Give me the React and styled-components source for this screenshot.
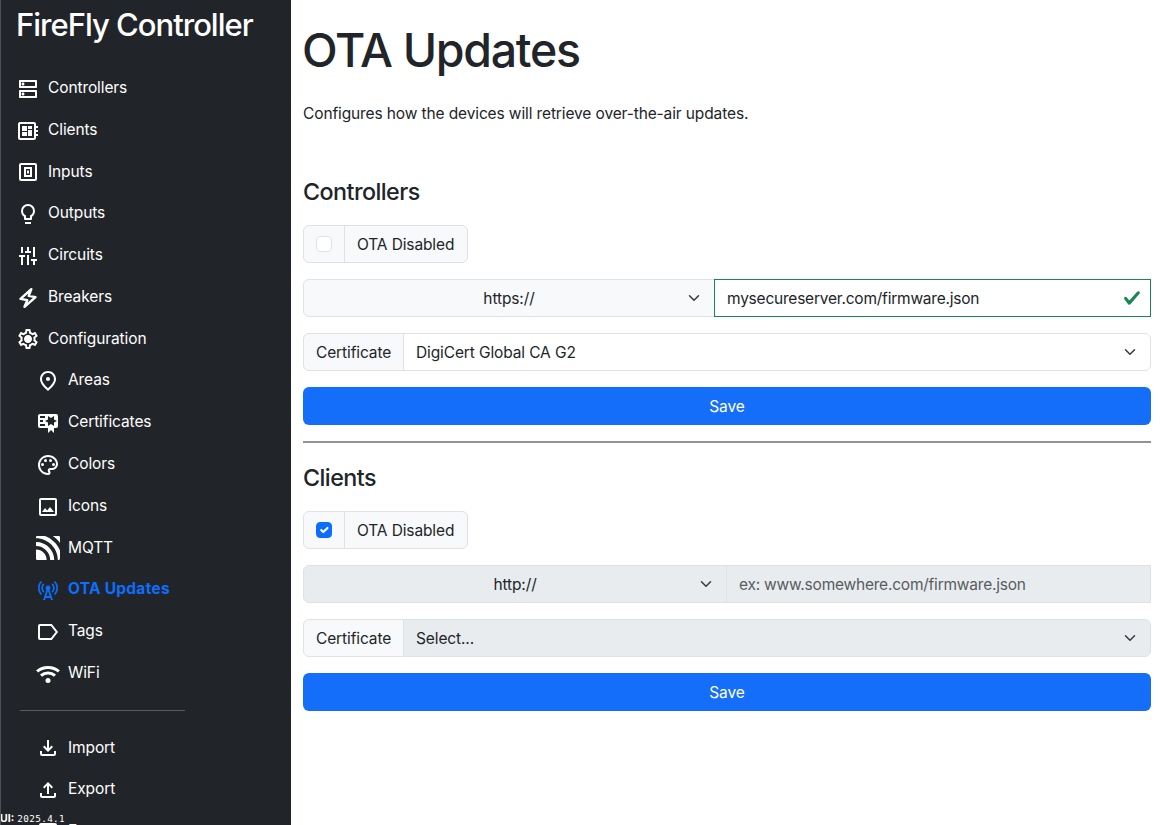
import React from "react";
import styled, { createGlobalStyle } from "styled-components";
import {
  MdOutlineDns,
  MdOutlineDeveloperBoard,
  MdOutlineSettings,
  MdOutlineFmdGood,
  MdOutlinePalette,
  MdCellTower,
  MdOutlineFileDownload,
  MdOutlineFileUpload,
} from "react-icons/md";
import { SiMqtt } from "react-icons/si";

const GlobalStyle = createGlobalStyle`
  *, *::before, *::after { box-sizing: border-box; }
  body {
    margin: 0;
    background: #fff;
    color: #212529;
    font-family: Inter, "Liberation Sans", sans-serif;
    font-size: 15.5px;
    line-height: 24px;
    letter-spacing: -0.12px;
  }
  h1, h2, p { margin: 0; }
  button, input { font: inherit; letter-spacing: inherit; }
`;

const Page = styled.div`
  display: flex;
  height: 825px;
  overflow: hidden;
`;

const Sidebar = styled.aside`
  position: relative;
  flex: 0 0 291px;
  height: 825px;
  overflow: hidden;
  background: #212529;
  border-left: 1px solid #495057;
  color: #fff;
`;

const Brand = styled.h1`
  padding: 6px 0 0 15px;
  font-size: 31px;
  font-weight: 500;
  line-height: 38px;
  letter-spacing: -1px;
  white-space: nowrap;
`;

const Nav = styled.nav`
  display: flex;
  flex-direction: column;
  padding-top: 23px;
`;

const NavItem = styled.a`
  display: flex;
  flex: none;
  gap: 8px;
  height: 41.785px;
  padding-top: 9px;
  padding-left: ${(p) => (p.$nested ? 35 : 15)}px;
  color: ${(p) => (p.$active ? "#0d6efd" : "#fff")};
  font-weight: ${(p) => (p.$active ? 700 : 400)};
  letter-spacing: ${(p) => (p.$active ? 0.26 : -0.1)}px;
  white-space: nowrap;

  > svg {
    flex: none;
    width: 24px;
    height: 24px;
    margin-top: 0.75px;
  }
`;

const NavDivider = styled.hr`
  flex: none;
  width: 165px;
  height: 1px;
  margin: 16.6px 0 15.4px 19px;
  border: 0;
  background: #585c60;
`;

const Version = styled.div`
  position: absolute;
  left: -1px;
  bottom: 1px;
  display: flex;
  gap: 3px;
  font-size: 10.5px;
  font-weight: 700;
  line-height: 11px;
  letter-spacing: 0;

  code {
    font-family: "DejaVu Sans Mono", monospace;
    font-size: 9.3px;
    font-weight: 400;
    letter-spacing: 0.4px;
  }
`;

const Main = styled.main`
  flex: 1;
  padding: 21px 9px 0 12px;
`;

const Title = styled.h1`
  margin-left: -1px;
  font-size: 46.5px;
  font-weight: 500;
  line-height: 58px;
  letter-spacing: -1.3px;
`;

const Lead = styled.p`
  margin-top: 23px;
  padding-bottom: 51px;
`;

const Section = styled.section`
  display: flex;
  flex-direction: column;
  gap: 16px;
`;

const SectionTitle = styled.h2`
  margin-bottom: 3px;
  font-size: 23.3px;
  font-weight: 500;
  line-height: 29px;
  letter-spacing: -0.55px;
`;

const Rule = styled.hr`
  height: 2px;
  margin: 16px 0 20px;
  border: 0;
  background: #909294;
`;

const Group = styled.div`
  display: flex;
  height: 38px;
`;

const Addon = styled.label`
  display: flex;
  align-items: center;
  padding: ${(p) => (p.$box ? 0 : "1px")} 12px 0;
  border: 1px solid #dee2e6;
  border-radius: ${(p) => (p.$end ? "0 6px 6px 0" : "6px 0 0 6px")};
  margin-left: ${(p) => (p.$end ? "-1px" : 0)};
  width: ${(p) => p.$width}px;
  background: #f8f9fa;
  white-space: nowrap;
`;

const Check = styled.span`
  display: block;
  width: 16px;
  height: 16px;
  border: 1px solid ${(p) => (p.$on ? "#0d6efd" : "#dee2e6")};
  border-radius: 4px;
  background: ${(p) => (p.$on ? "#0d6efd" : "#fff")};

  svg {
    display: block;
    width: 14px;
    height: 14px;
  }
`;

const SelectBox = styled.div`
  display: flex;
  align-items: center;
  position: relative;
  flex: ${(p) => (p.$width ? `0 0 ${p.$width}px` : "1")};
  justify-content: ${(p) => (p.$center ? "center" : "flex-start")};
  margin-left: ${(p) => (p.$center ? 0 : "-1px")};
  padding: 1px 12px 0;
  border: 1px solid #dee2e6;
  border-radius: ${(p) => (p.$center ? "6px 0 0 6px" : "0 6px 6px 0")};
  background: ${(p) => (p.$disabled ? "#e9ecef" : p.$center ? "#f8f9fa" : "#fff")};

  svg {
    position: absolute;
    right: 14px;
    top: 12px;
    width: 12px;
    height: 12px;
  }
`;

const UrlField = styled.div`
  position: relative;
  display: flex;
  align-items: center;
  flex: 1;
  margin-left: -1px;
  padding: 1px 12px 0;
  border: 1px solid ${(p) => (p.$valid ? "#198754" : "#dee2e6")};
  background: ${(p) => (p.$valid ? "#fff" : "#e9ecef")};
  color: ${(p) => (p.$valid ? "#212529" : "#585c60")};
  letter-spacing: -0.22px;

  svg {
    position: absolute;
    right: 9px;
    top: 9px;
    width: 18px;
    height: 18px;
  }
`;

const SaveButton = styled.button`
  height: 38px;
  padding: 1px 0 0;
  border: 0;
  border-radius: 6px;
  background: #146ef9;
  color: #fff;
`;

const Glyph = ({ children }) => (
  <svg viewBox="0 0 24 24" fill="currentColor">
    {children}
  </svg>
);

const InputIcon = () => (
  <Glyph>
    <path fillRule="evenodd" d="M5 3h14a2 2 0 0 1 2 2v14a2 2 0 0 1-2 2H5a2 2 0 0 1-2-2V5a2 2 0 0 1 2-2zm0 2v14h14V5zM8 7h8v10H8zm2 2v6h4V9z" />
    <path d="M11 10.500h2v3h-2z" />
  </Glyph>
);

const BulbIcon = () => (
  <Glyph>
    <path d="M12,2A7,7 0 0,1 19,9C19,11.38 17.81,13.47 16,14.74V17A1,1 0 0,1 15,18H9A1,1 0 0,1 8,17V14.74C6.19,13.47 5,11.38 5,9A7,7 0 0,1 12,2M9,22V20H15V22ZM12,4A5,5 0 0,0 7,9C7,11.05 8.23,12.81 10,13.58V16H14V13.58C15.77,12.81 17,11.05 17,9A5,5 0 0,0 12,4Z" />
  </Glyph>
);

const MixIcon = () => (
  <Glyph>
    <path d="M5 3h2v6H5zM3 11h6v2H7v8H5v-8H3zM11 3h2v4h2v2H9V7h2zM11 11h2v10h-2zM17 3h2v10h-2zM15 15h6v2h-2v4h-2v-4h-2z" />
  </Glyph>
);

const BoltIcon = () => (
  <Glyph>
    <path
      d="M15.300 3.200 4.500 12.900l6.800 1.200L8.500 20.800 19.500 11.100l-6.800-1.200z"
      fill="none"
      stroke="currentColor"
      strokeWidth="2.4"
      strokeLinejoin="round"
    />
  </Glyph>
);

const GearIcon = () => (
  <Glyph>
    <MdOutlineSettings size={24} />
    <circle cx="12" cy="12" r="3.400" />
  </Glyph>
);

const CertificateIcon = () => (
  <Glyph>
    <path d="M4,3C2.89,3 2,3.89 2,5V15A2,2 0 0,0 4,17H12V22L15,19L18,22V17H20A2,2 0 0,0 22,15V8L22,6V5A2,2 0 0,0 20,3H16V3H4M12,5L15,7L18,5V8.5L21,10L18,11.5V15L15,13L12,15V11.5L9,10L12,8.5V5M4,5H9V7H4V5M4,9H7V11H4V9M4,13H9V15H4V13Z" />
  </Glyph>
);

const ImageIcon = () => (
  <Glyph>
    <path fillRule="evenodd" d="M5 3h14a2 2 0 0 1 2 2v14a2 2 0 0 1-2 2H5a2 2 0 0 1-2-2V5a2 2 0 0 1 2-2zm0 2v14h14V5z" />
    <path d="M6 17l3-4 2.200 2.500L14 12l4 5z" />
  </Glyph>
);

const TagIcon = () => (
  <Glyph>
    <path d="M4 5h11.300L20.800 12l-5.500 7H4a1 1 0 0 1-1-1V6a1 1 0 0 1 1-1z" fill="none" stroke="currentColor" strokeWidth="2" />
  </Glyph>
);

const WifiIcon = () => (
  <Glyph>
    <circle cx="12" cy="18.500" r="2.500" />
    <path d="M1.100 9.400Q5.600 5.500 12 5.500T22.900 9.400M5 13.700Q8 11 12 11T19 13.700" fill="none" stroke="currentColor" strokeWidth="3" />
  </Glyph>
);

const Chevron = () => (
  <svg viewBox="0 0 16 16" fill="none" stroke="#343a40" strokeWidth="2" strokeLinecap="round" strokeLinejoin="round">
    <path d="m2 5 6 6 6-6" />
  </svg>
);

const ValidMark = () => (
  <svg viewBox="0 0 8 8" fill="#198754">
    <path d="M2.3 6.73.6 4.53c-.4-1.04.46-1.4 1.1-.8l1.1 1.4 3.4-3.8c.6-.63 1.6-.27 1.2.7l-4 4.6c-.43.5-.8.4-1.1.1z" />
  </svg>
);

const NAV = [
  { label: "Controllers", icon: MdOutlineDns },
  { label: "Clients", icon: MdOutlineDeveloperBoard },
  { label: "Inputs", icon: InputIcon },
  { label: "Outputs", icon: BulbIcon },
  { label: "Circuits", icon: MixIcon },
  { label: "Breakers", icon: BoltIcon },
  { label: "Configuration", icon: GearIcon },
  { label: "Areas", icon: MdOutlineFmdGood, nested: true },
  { label: "Certificates", icon: CertificateIcon, nested: true },
  { label: "Colors", icon: MdOutlinePalette, nested: true },
  { label: "Icons", icon: ImageIcon, nested: true },
  { label: "MQTT", icon: SiMqtt, nested: true },
  { label: "OTA Updates", icon: MdCellTower, nested: true, active: true },
  { label: "Tags", icon: TagIcon, nested: true },
  { label: "WiFi", icon: WifiIcon, nested: true },
];

const TOOLS = [
  { label: "Import", icon: MdOutlineFileDownload, nested: true },
  { label: "Export", icon: MdOutlineFileUpload, nested: true },
  { label: "Events", icon: ImageIcon, nested: true },
];

const renderItem = ({ label, icon: Icon, nested, active }) => (
  <NavItem key={label} $nested={nested} $active={active}>
    <Icon />
    <span>{label}</span>
  </NavItem>
);

const OtaSection = ({ title, disabled, protocol, protocolWidth, url, certificate }) => (
  <Section>
    <SectionTitle>{title}</SectionTitle>
    <Group>
      <Addon $box $width={42}>
        <Check $on={disabled}>
          {disabled && (
            <svg viewBox="0 0 20 20" fill="none" stroke="#fff" strokeWidth="3" strokeLinecap="round" strokeLinejoin="round">
              <path d="m6 10 3 3 6-6" />
            </svg>
          )}
        </Check>
      </Addon>
      <Addon $end $width={124}>OTA Disabled</Addon>
    </Group>
    <Group>
      <SelectBox $center $disabled={disabled} $width={protocolWidth}>
        {protocol}
        <Chevron />
      </SelectBox>
      <UrlField $valid={!disabled}>
        {url}
        {!disabled && <ValidMark />}
      </UrlField>
    </Group>
    <Group>
      <Addon $width={101}>Certificate</Addon>
      <SelectBox $disabled={disabled}>
        {certificate}
        <Chevron />
      </SelectBox>
    </Group>
    <SaveButton>Save</SaveButton>
  </Section>
);

export default function App() {
  return (
    <Page>
      <GlobalStyle />
      <Sidebar>
        <Brand>FireFly Controller</Brand>
        <Nav>
          {NAV.map(renderItem)}
          <NavDivider />
          {TOOLS.map(renderItem)}
        </Nav>
        <Version>
          UI: <code>2025.4.1</code>
        </Version>
      </Sidebar>
      <Main>
        <Title>OTA Updates</Title>
        <Lead>Configures how the devices will retrieve over-the-air updates.</Lead>
        <OtaSection
          title="Controllers"
          protocol="https://"
          protocolWidth={412}
          url="mysecureserver.com/firmware.json"
          certificate="DigiCert Global CA G2"
        />
        <Rule />
        <OtaSection
          title="Clients"
          disabled
          protocol="http://"
          protocolWidth={424}
          url="ex: www.somewhere.com/firmware.json"
          certificate="Select..."
        />
      </Main>
    </Page>
  );
}
